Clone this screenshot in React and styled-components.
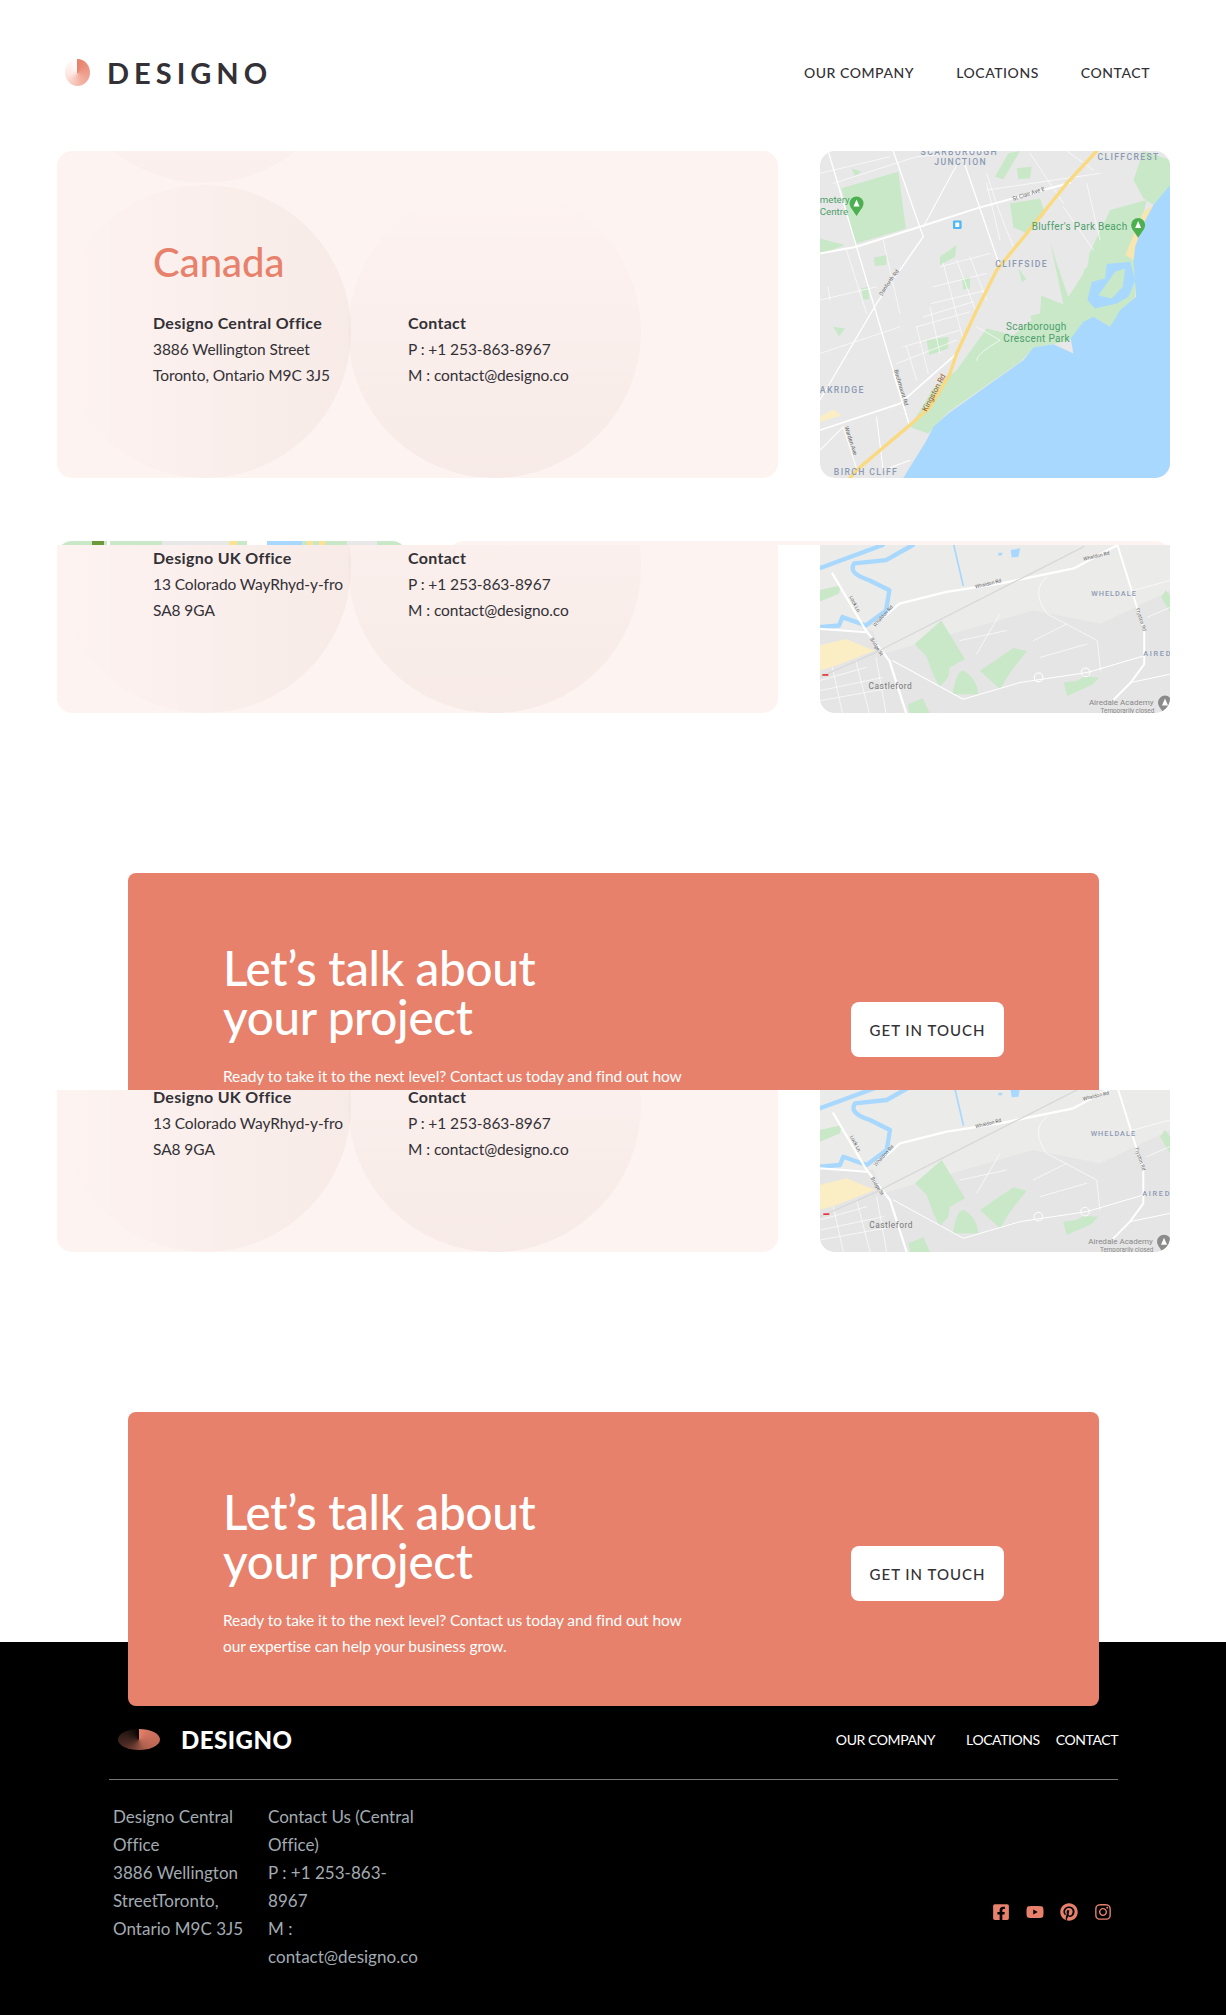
import React from "react";
import styled, { createGlobalStyle } from "styled-components";
import { FaFacebookSquare, FaYoutube, FaPinterest, FaInstagram } from "react-icons/fa";

const GlobalStyle = createGlobalStyle`
  * { box-sizing: border-box; }
  body {
    margin: 0;
    background: #fff;
    color: #333136;
    font-family: "Lato", "Liberation Sans", sans-serif;
  }
`;

const Header = styled.header`
  display: flex;
  align-items: center;
  justify-content: space-between;
  height: 145px;
  margin-bottom: 6px;
  padding: 0 76px 0 65px;
`;

const Brand = styled.div`
  display: flex;
  align-items: center;
  gap: ${(p) => p.$gap}px;
`;

const LogoMark = styled.span`
  display: block;
  width: ${(p) => p.$w}px;
  height: ${(p) => p.$h}px;
  border-radius: 50%;
  background: ${(p) => p.$fill};
`;

const BrandName = styled.span`
  font-size: 29px;
  font-weight: 700;
  letter-spacing: 5px;
  line-height: 1;
`;

const Nav = styled.nav`
  display: flex;
  gap: 42px;
  font-size: 14px;
  font-weight: 500;
  letter-spacing: 0.55px;
`;

const Locations = styled.section`
  padding: 0 56px 0 57px;
`;

const Row = styled.div`
  display: flex;
  flex-direction: ${(p) => (p.$reverse ? "row-reverse" : "row")};
  justify-content: space-between;
  height: ${(p) => p.$height}px;
  margin-top: ${(p) => p.$top || 0}px;
  overflow: hidden;
`;

const Card = styled.article`
  position: relative;
  flex: 0 0 721px;
  height: ${(p) => (p.$peek ? "40px" : "auto")};
  display: flex;
  flex-direction: column;
  justify-content: flex-end;
  padding: 0 0 90px 96px;
  overflow: hidden;
  background: #fdf3f0;
  border-radius: ${(p) => (p.$cut ? "0 0 15px 15px" : "15px")};
`;

const Circle = styled.span`
  position: absolute;
  left: ${(p) => p.$left}px;
  bottom: ${(p) => p.$bottom || 0}px;
  width: 293px;
  height: 293px;
  border-radius: 50%;
  background: linear-gradient(
    ${(p) => p.$dir},
    rgba(93, 2, 2, 0) 0%,
    rgba(93, 2, 2, ${(p) => p.$alpha || 0.036}) 100%
  );
`;

const Title = styled.h2`
  position: relative;
  margin: 0 0 24px;
  color: #e7816b;
  font-size: 40px;
  font-weight: 500;
  line-height: 48px;
`;

const Columns = styled.div`
  position: relative;
  display: grid;
  grid-template-columns: 255px 1fr;
`;

const Lines = styled.p`
  margin: 0;
  font-size: 15.5px;
  line-height: 26px;
  letter-spacing: -0.08px;
  color: #333136;
  b {
    font-size: 16px;
    font-weight: 700;
    letter-spacing: 0.3px;
  }
`;

const MapFrame = styled.svg`
  display: block;
  flex: 0 0 350px;
  width: 350px;
  height: ${(p) => (p.$peek ? "40px" : "100%")};
  border-radius: ${(p) => (p.$cut ? "0 0 15px 15px" : "15px")};
  background: ${(p) => p.$bg};
`;

const MapText = styled.text`
  font-family: "Roboto", "Liberation Sans", sans-serif;
  font-size: ${(p) => p.$size || 26}px;
  fill: ${(p) => p.$color || "#8b9ab4"};
  letter-spacing: ${(p) => p.$spacing || 0}px;
  font-weight: ${(p) => p.$weight || 400};
`;

const TalkBand = styled.section`
  position: relative;
  z-index: 1;
  display: flex;
  align-items: flex-start;
  justify-content: space-between;
  width: 971px;
  height: ${(p) => p.$height}px;
  margin: ${(p) => p.$top}px 0 0 128px;
  padding: ${(p) => p.$padTop}px 95px 0 95px;
  overflow: hidden;
  background: #e7816b;
  color: #fff;
  border-radius: ${(p) => (p.$cut ? "8px 8px 0 0" : "8px")};
`;

const TalkTitle = styled.h2`
  margin: 0 0 22px;
  font-size: 47.6px;
  font-weight: 500;
  line-height: 49px;
  letter-spacing: -0.3px;
`;

const TalkCopy = styled.p`
  margin: 0;
  font-size: 15.5px;
  line-height: 26px;
  letter-spacing: -0.1px;
  white-space: nowrap;
`;

const TalkButton = styled.a`
  display: flex;
  align-items: center;
  justify-content: center;
  flex: 0 0 153px;
  height: 55px;
  margin-top: 59px;
  background: #fff;
  border-radius: 8px;
  color: #333136;
  font-size: 15px;
  font-weight: 500;
  letter-spacing: 1px;
`;

const Footer = styled.footer`
  margin-top: -64px;
  padding: 79px 108px 44px 109px;
  background: #000;
  color: #fff;
`;

const FooterTop = styled.div`
  display: flex;
  align-items: center;
  justify-content: space-between;
  height: 36px;
  padding-left: 9px;
`;

const FooterName = styled.span`
  font-size: 24px;
  font-weight: 900;
  letter-spacing: 0.5px;
`;

const FooterNav = styled.nav`
  display: flex;
  font-size: 14px;
  letter-spacing: -0.42px;
`;

const FooterLink = styled.a`
  margin-left: ${(p) => p.$space || 0}px;
`;

const Rule = styled.hr`
  height: 1px;
  margin: 22px 0 23px;
  border: 0;
  background: #777;
`;

const FooterBottom = styled.div`
  display: flex;
  align-items: center;
  justify-content: space-between;
  padding: 0 6px 0 4px;
`;

const Details = styled.div`
  display: grid;
  grid-template-columns: 155px auto;
`;

const DetailText = styled.p`
  margin: 0;
  color: #a3abb2;
  font-size: 17px;
  line-height: 28px;
  letter-spacing: 0.02px;
  white-space: nowrap;
`;

const Social = styled.div`
  display: flex;
  align-items: center;
  gap: 16px;
  margin-top: 49px;
  color: #e7816b;
  font-size: 18px;
  svg {
    display: block;
  }
`;

const Road = styled.path`
  fill: none;
  stroke: ${(p) => p.$color || "#fff"};
  stroke-width: ${(p) => p.$w || 3};
  stroke-linecap: round;
  stroke-linejoin: round;
`;

const Area = styled.path`
  fill: ${(p) => p.$color};
`;

const Blurred = styled.g`
  filter: blur(1.6px);
`;

const Pin = ({ x, y, color }) => (
  <g>
    <circle cx={x} cy={y} r="21" fill={color} />
    <path d={`M${x - 18} ${y + 11} L${x} ${y + 38} L${x + 18} ${y + 11} Z`} fill={color} />
    <path d={`M${x - 9} ${y + 9} L${x} ${y - 12} L${x + 9} ${y + 9} Z`} fill="#fff" />
  </g>
);

const ScarboroughMap = () => (
  <MapFrame viewBox="60 33 1050 980" preserveAspectRatio="xMidYMax slice" $bg="#e8e8e8">
    <Blurred>
      <Area $color="#c8e8c8" d="M125 145 L295 95 L318 265 L165 312 Z" />
      <Area $color="#c8e8c8" d="M60 295 L135 315 L60 345 Z" />
      <Area $color="#c8e8c8" d="M630 190 L720 175 L735 222 L682 280 L640 262 Z" />
      <Area $color="#c8e8c8" d="M585 110 L625 40 L660 33 L610 118 Z" />
      <Area $color="#c8e8c8" d="M650 85 L695 80 L690 115 L655 118 Z" />
      <Area $color="#c8e8c8" d="M155 85 L185 95 L165 108 Z" />
      <Area $color="#c8e8c8" d="M222 352 L262 345 L258 375 L225 378 Z" />
      <Area $color="#c8e8c8" d="M420 350 L470 315 L465 350 L420 375 Z" />
      <Area $color="#c8e8c8" d="M485 415 L510 410 L510 445 L490 448 Z" />
      <Area $color="#c8e8c8" d="M185 445 L205 440 L208 478 L190 478 Z" />
      <Area $color="#c8e8c8" d="M100 560 L135 565 L118 590 Z" />
      <Area $color="#c8e8c8" d="M380 600 L445 590 L445 625 L388 645 Z" />
      <Area $color="#c8e8c8" d="M1000 120 L1030 33 L1110 60 L1110 140 L1060 195 L1030 175 Z" />
      <Area
        $color="#c8e8c8"
        d="M750 305 L775 385 L805 425 L862 380 L868 340 L930 210 L1040 180 L1010 300 L1005 470 L930 560 L880 530 L810 600 L700 625 L660 665 L445 815 L385 880 L330 860 L400 745 L470 690 L560 565 L640 585 L695 540 L655 385 L712 462 L790 492 Z"
      />
      <Area $color="#e8e8e8" d="M660 430 L700 400 L725 450 L720 520 L680 530 Z" />
      <Area $color="#e8e8e8" d="M770 320 L800 300 L860 350 L850 400 L805 470 L780 400 Z" />
      <Area $color="#f7e6b0" d="M1060 195 L1030 215 L975 345 L1000 360 L1030 260 Z" />
      <Area $color="#fbeec5" d="M60 830 L100 808 L125 825 L60 845 Z" />
      <Area
        $color="#a8d8fd"
        d="M1110 135 L1060 195 L1030 250 L1005 320 L1000 365 L1008 470 L960 510 L930 560 L880 530 L850 545 L812 595 L820 640 L760 612 L700 622 L670 660 L445 820 L400 860 L380 900 L310 1013 L1110 1013 Z"
      />
      <Area
        $color="#a8d8fd"
        d="M920 372 L990 365 L1005 420 L985 470 L950 490 L885 505 L862 480 L875 425 L915 415 Z"
      />
      <Area $color="#c8e8c8" d="M945 395 L975 385 L968 440 L935 475 L895 465 L920 430 Z" />
      <Road d="M85 33 L330 860" $w={4} />
      <Road d="M280 33 L370 290 L230 490 L60 780" $w={4} />
      <Road d="M490 60 L600 380" $w={4} />
      <Road d="M470 75 L370 260" $w={3} />
      <Road d="M60 100 L270 50" $w={2} />
      <Road d="M100 130 L350 50 L560 33" $w={2} />
      <Road d="M60 480 L230 440 M60 640 L300 560 M90 480 L85 440" $w={2} />
      <Road d="M250 300 L300 520 M140 330 L200 520" $w={2} />
      <Road d="M420 380 L570 340 M395 490 L560 450 M350 560 L510 515 M290 670 L470 600 M400 440 L560 400 M370 530 L520 485 M310 620 L480 570" $w={2} />
      <Road d="M430 370 L490 600 M470 360 L530 520 M350 560 L385 700 M320 620 L350 720 M510 350 L560 480 M390 500 L420 640" $w={2} />
      <Road d="M560 150 L900 100 M790 200 L880 330 M560 130 L600 300 M690 40 L790 190 M860 130 L900 300 M800 33 L880 90" $w={2} />
      <Road d="M60 870 L300 790 L470 640" $w={5} />
      <Road d="M60 340 L170 320 L360 260 L530 205 L810 128" $w={6} />
      <Road d="M130 860 L175 1000 M60 930 L130 860 M230 830 L250 990 L330 960" $w={3} />
      <Road d="M280 700 L330 860" $w={3} />
      <Road d="M560 100 Q590 200 640 320 M530 560 L600 600 Q530 640 530 660" $w={2} />
      <Road d="M890 33 L800 130 L680 280 L590 390 L530 510 L470 640 L450 700 L390 800 L335 850 L175 985 L150 1013" $color="#fad97f" $w={10} />
      <rect x="459" y="241" width="26" height="26" rx="4" fill="#4db8f5" />
      <rect x="466" y="247" width="12" height="14" rx="2" fill="#fff" />
    </Blurred>
    <Pin x={170} y={190} color="#4caf50" />
    <Pin x={1014} y={255} color="#4caf50" />
    <MapText x="60" y="190" $size={29} $color="#4c9f68">metery</MapText>
    <MapText x="60" y="226" $size={29} $color="#4c9f68">Centre</MapText>
    <MapText x="695" y="270" $size={30} $color="#4c9f68" $spacing={1}>Bluffer's Park Beach</MapText>
    <MapText x="618" y="568" $size={30} $color="#4c9f68" $spacing={1}>Scarborough</MapText>
    <MapText x="610" y="604" $size={30} $color="#4c9f68" $spacing={1}>Crescent Park</MapText>
    <MapText x="362" y="45" $spacing={4} $weight={500}>SCARBOROUGH</MapText>
    <MapText x="403" y="76" $spacing={4} $weight={500}>JUNCTION</MapText>
    <MapText x="892" y="60" $spacing={4} $weight={500}>CLIFFCREST</MapText>
    <MapText x="586" y="382" $spacing={4} $weight={500}>CLIFFSIDE</MapText>
    <MapText x="60" y="758" $spacing={4} $weight={500}>AKRIDGE</MapText>
    <MapText x="102" y="1005" $spacing={4} $weight={500}>BIRCH CLIFF</MapText>
    <MapText transform="translate(640 182) rotate(-18)" $size={17} $color="#666">St Clair Ave E</MapText>
    <MapText transform="translate(246 468) rotate(-55)" $size={17} $color="#666">Danforth Rd</MapText>
    <MapText transform="translate(282 690) rotate(73)" $size={17} $color="#666">Birchmount Rd</MapText>
    <MapText transform="translate(134 860) rotate(72)" $size={17} $color="#666">Warden Ave</MapText>
    <MapText transform="translate(380 815) rotate(-62)" $size={23} $color="#9b5a2c">Kingston Rd</MapText>
  </MapFrame>
);

const CastlefordMap = () => (
  <MapFrame viewBox="60 45 1050 501" preserveAspectRatio="xMidYMax slice" $cut $bg="#ebebe9">
    <Blurred>
      <Area $color="#e5e5e5" d="M60 300 L220 300 L250 370 L700 240 L900 280 L1110 180 L1110 546 L60 546 Z" />
      <Area $color="#fbeec5" d="M60 345 L140 325 L225 360 L110 405 L60 420 Z" />
      <Area $color="#c8e8c8" d="M60 180 L125 165 L120 190 L60 215 Z" />
      <Area $color="#c8e8c8" d="M345 340 L425 270 L495 385 L450 410 L445 440 L420 468 L400 430 L380 375 Z" />
      <Area $color="#c8e8c8" d="M458 490 Q470 420 490 420 Q530 440 535 490 Z" />
      <Area $color="#c8e8c8" d="M540 420 L640 352 L680 362 L630 425 L600 475 Z" />
      <Area $color="#c8e8c8" d="M790 455 L830 450 L850 438 L895 440 L875 462 L800 495 Z" />
      <Area $color="#c8e8c8" d="M325 520 L370 502 L390 546 L330 546 Z" />
      <Area $color="#c8e8c8" d="M1080 200 L1095 180 L1110 200 L1110 250 Z" />
      <Road d="M60 115 L250 45 M340 45 L260 90 L165 100 Q145 130 210 150 L270 180 L260 240 L200 285 L130 260 L120 285 L60 290" $color="#a8d8fd" $w={13} />
      <Road d="M462 45 L490 165" $color="#a8d8fd" $w={5} />
      <Area $color="#a8d8fd" d="M632 60 L660 55 L655 80 L635 82 Z M595 68 L608 68 L605 76 L595 76 Z" />
      <Road d="M100 130 L200 300 L270 390 L320 546" $w={7} />
      <Road d="M60 295 L200 305" $w={6} />
      <Road d="M225 285 L300 220 L440 185 L600 160 L820 115 L950 45" $w={7} />
      <Road d="M950 45 L1030 300 L1030 400 L990 455 L940 505" $w={6} />
      <Road d="M280 390 L490 505 L660 455 L860 425 L1030 375 M990 455 L1110 430" $w={3} />
      <Road d="M740 140 Q690 180 740 250 L890 330 L900 420 M480 330 L620 300 M530 370 L600 250 M700 330 L800 280 M720 380 L860 340" $w={2} />
      <Road d="M60 450 L200 410 M60 480 L250 440 M60 510 L280 470 M100 410 L130 546 M170 390 L210 546 M230 380 L260 546 M1000 180 L1110 150 M1040 260 L1110 230" $w={2} />
      <circle cx="715" cy="440" r="13" fill="none" stroke="#fff" strokeWidth="3" />
      <circle cx="855" cy="425" r="13" fill="none" stroke="#fff" strokeWidth="3" />
      <Road d="M60 440 L220 370 L850 50" $color="#d8d8d8" $w={4} />
      <rect x="70" y="430" width="18" height="5" fill="#e8333a" />
    </Blurred>
    <Pin x={1092} y={515} color="#8b8b8b" />
    <MapText x="872" y="197" $size={22} $spacing={3} $weight={500}>WHELDALE</MapText>
    <MapText x="1027" y="377" $size={22} $spacing={5} $weight={500}>AIRED</MapText>
    <MapText x="208" y="475" $size={25} $color="#777" $spacing={1.5}>Castleford</MapText>
    <MapText x="865" y="521" $size={24} $color="#888">Airedale Academy</MapText>
    <MapText x="900" y="545" $size={19} $color="#888">Temporarily closed</MapText>
    <MapText transform="translate(527 175) rotate(-14)" $size={15} $color="#666">Whaldon Rd</MapText>
    <MapText transform="translate(850 92) rotate(-14)" $size={15} $color="#666">Whaldon Rd</MapText>
    <MapText transform="translate(228 290) rotate(-48)" $size={15} $color="#666">Whaldon Rd</MapText>
    <MapText transform="translate(150 200) rotate(62)" $size={15} $color="#666">Lock Ln</MapText>
    <MapText transform="translate(212 325) rotate(58)" $size={15} $color="#666">Bridge St</MapText>
    <MapText transform="translate(1005 235) rotate(72)" $size={15} $color="#666">Fryston Rd</MapText>
  </MapFrame>
);

const OfficeColumns = ({ name, street, city }) => (
  <Columns>
    <Lines>
      <b>{name}</b>
      <br />
      {street}
      <br />
      {city}
    </Lines>
    <Lines>
      <b>Contact</b>
      <br />
      P : +1 253-863-8967
      <br />
      M : contact@designo.co
    </Lines>
  </Columns>
);

const Office = ({ height }) => (
  <Row $height={height}>
    <Card $cut>
      <Circle $left={1} $dir="to right" />
      <Circle $left={291} $dir="to bottom" />
      <OfficeColumns
        name="Designo UK Office"
        street="13 Colorado WayRhyd-y-fro"
        city="SA8 9GA"
      />
    </Card>
    <CastlefordMap />
  </Row>
);

const PeekStrip = () => (
  <MapFrame viewBox="0 0 350 40" preserveAspectRatio="none" $peek $bg="#c8e8c8">
    <rect x="35" width="12" height="40" fill="#6c9a3a" />
    <rect x="50" width="3" height="40" fill="#fff" />
    <rect x="105" width="70" height="40" fill="#e8e8e8" />
    <rect x="172" width="8" height="40" fill="#fde293" />
    <rect x="190" width="30" height="40" fill="#fff" />
    <rect x="210" width="35" height="40" fill="#a8d8fd" />
    <rect x="250" width="6" height="40" fill="#fde293" />
    <rect x="262" width="6" height="40" fill="#fde293" />
    <rect x="290" width="30" height="40" fill="#e8e8e8" />
  </MapFrame>
);

const Talk = ({ height, top, padTop, cut, children }) => (
  <TalkBand $height={height} $top={top} $padTop={padTop} $cut={cut}>
    <div>
      <TalkTitle>
        Let’s talk about
        <br />
        your project
      </TalkTitle>
      <TalkCopy>{children}</TalkCopy>
    </div>
    <TalkButton>GET IN TOUCH</TalkButton>
  </TalkBand>
);

export default function App() {
  return (
    <>
      <GlobalStyle />
      <Header>
        <Brand $gap={17}>
          <LogoMark $w={25} $h={27} $fill="conic-gradient(#e7816b, #f3b3a4 45%, #fde6e0 70%, #fff 100%)" />
          <BrandName>DESIGNO</BrandName>
        </Brand>
        <Nav>
          <a>OUR COMPANY</a>
          <a>LOCATIONS</a>
          <a>CONTACT</a>
        </Nav>
      </Header>
      <Locations>
        <Row $height={327}>
          <Card>
            <Circle $left={1} $dir="to bottom" $bottom={295} $alpha={0.014} />
            <Circle $left={1} $dir="to right" />
            <Circle $left={291} $dir="to bottom" />
            <Title>Canada</Title>
            <OfficeColumns
              name="Designo Central Office"
              street="3886 Wellington Street"
              city="Toronto, Ontario M9C 3J5"
            />
          </Card>
          <ScarboroughMap />
        </Row>
        <Row $height={4} $reverse $top={63}>
          <Card $peek />
          <PeekStrip />
        </Row>
        <Office height={168} />
      </Locations>
      <Talk height={217} top={160} padTop={70} cut>
        Ready to take it to the next level? Contact us today and find out how
      </Talk>
      <Locations>
        <Office height={162} />
      </Locations>
      <Talk height={294} top={160} padTop={75}>
        Ready to take it to the next level? Contact us today and find out how
        <br />
        our expertise can help your business grow.
      </Talk>
      <Footer>
        <FooterTop>
          <Brand $gap={21}>
            <LogoMark $w={42} $h={21} $fill="conic-gradient(#e7816b, #b0604e 40%, #4a2a22 70%, #000 100%)" />
            <FooterName>DESIGNO</FooterName>
          </Brand>
          <FooterNav>
            <FooterLink>OUR COMPANY</FooterLink>
            <FooterLink $space={31}>LOCATIONS</FooterLink>
            <FooterLink $space={16}>CONTACT</FooterLink>
          </FooterNav>
        </FooterTop>
        <Rule />
        <FooterBottom>
          <Details>
            <DetailText>
              Designo Central
              <br />
              Office
              <br />
              3886 Wellington
              <br />
              StreetToronto,
              <br />
              Ontario M9C 3J5
            </DetailText>
            <DetailText>
              Contact Us (Central
              <br />
              Office)
              <br />
              P : +1 253-863-
              <br />
              8967
              <br />
              M :
              <br />
              contact@designo.co
            </DetailText>
          </Details>
          <Social>
            <FaFacebookSquare />
            <FaYoutube />
            <FaPinterest />
            <FaInstagram />
          </Social>
        </FooterBottom>
      </Footer>
    </>
  );
}
